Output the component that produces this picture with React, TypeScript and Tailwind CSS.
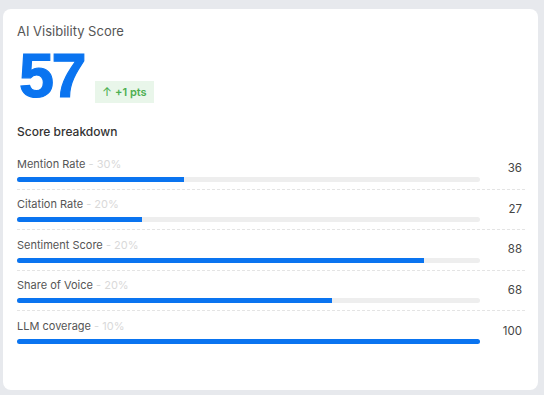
import React from 'react';

const ROWS = [
  { label: 'Mention Rate', weight: '30%', value: 36 },
  { label: 'Citation Rate', weight: '20%', value: 27 },
  { label: 'Sentiment Score', weight: '20%', value: 88 },
  { label: 'Share of Voice', weight: '20%', value: 68 },
  { label: 'LLM coverage', weight: '10%', value: 100 },
];

const App: React.FC = () => {
  return (
    <div
      className="w-[544px] h-[395px] bg-[#e7e9ed] pt-[9px] pl-[3px] pr-[6px] pb-[5px]"
      style={{ fontFamily: 'Inter, "Open Sans", sans-serif' }}
    >
      <div className="h-full bg-white rounded-[8px] pl-[14px] pr-[13px] pt-[13px]">
        <h1 className="text-[13px] leading-[18px] text-[#555]">AI Visibility Score</h1>

        {/* main score */}
        <div className="flex items-end gap-[11px] mt-[12px] h-[46px]">
          <span
            className="text-[63px] leading-[46px] font-bold text-[#0a74f0] tracking-[-2.5px] ml-[2px] [-webkit-text-stroke:1.2px_#0a74f0]"
            style={{ fontFamily: '"Liberation Sans", Arial, sans-serif' }}
          >
            57
          </span>
          <span className="mb-[-5px] h-[22px] px-[7px] flex items-center gap-[3px] bg-[#e9f6ea] text-[#4caf50] text-[11px] font-semibold">
            <span className="text-[12px] font-normal">↑</span>+1 pts
          </span>
        </div>

        <h2 className="mt-[26px] text-[12px] leading-[16px] font-medium text-[#333]">Score breakdown</h2>

        <div className="mt-[9px] flex flex-col">
          {ROWS.map((row, i) => (
            <div
              key={row.label}
              className={`flex items-center h-[40.5px] ${i < ROWS.length - 1 ? 'border-b border-dashed border-[#e4e4e4]' : ''}`}
            >
              <div className="w-[463px] pt-[1px]">
                <div className="text-[11px] leading-[14px] text-[#555]">
                  {row.label}
                  <span className="text-[#d9d9d9]"> - {row.weight}</span>
                </div>
                <div className="mt-[6px] h-[5px] rounded-full bg-[#eeeeee] overflow-hidden">
                  <div className="h-full bg-[#0a74f0]" style={{ width: `${row.value}%` }} />
                </div>
              </div>
              <div className="flex-1 text-right text-[11.5px] text-[#444] pr-[3px]">{row.value}</div>
            </div>
          ))}
        </div>
      </div>
    </div>
  );
};

export default App;
